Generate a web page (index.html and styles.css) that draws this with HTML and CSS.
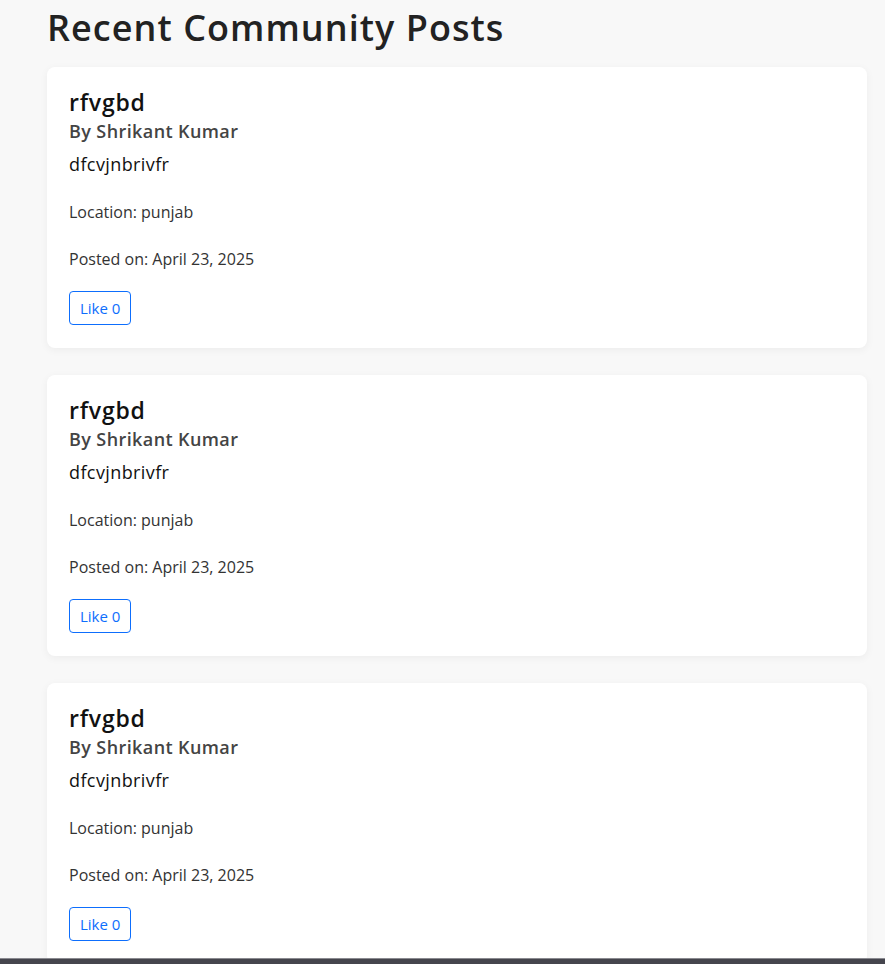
FILE: index.html
```html
<!DOCTYPE html>
<html lang="en">
<head>
<meta charset="utf-8">
<title>Recent Community Posts</title>
<link rel="stylesheet" href="styles.css">
</head>
<body>
<main class="page">
  <h1 class="page-title">Recent Community Posts</h1>
  <section class="posts">
    <article class="post">
      <h3 class="post-title">rfvgbd</h3>
      <p class="post-author">By Shrikant Kumar</p>
      <p class="post-body">dfcvjnbrivfr</p>
      <p class="post-meta">Location: punjab</p>
      <p class="post-meta">Posted on: April 23, 2025</p>
      <button class="like-btn">Like 0</button>
    </article>
    <article class="post">
      <h3 class="post-title">rfvgbd</h3>
      <p class="post-author">By Shrikant Kumar</p>
      <p class="post-body">dfcvjnbrivfr</p>
      <p class="post-meta">Location: punjab</p>
      <p class="post-meta">Posted on: April 23, 2025</p>
      <button class="like-btn">Like 0</button>
    </article>
    <article class="post">
      <h3 class="post-title">rfvgbd</h3>
      <p class="post-author">By Shrikant Kumar</p>
      <p class="post-body">dfcvjnbrivfr</p>
      <p class="post-meta">Location: punjab</p>
      <p class="post-meta">Posted on: April 23, 2025</p>
      <button class="like-btn">Like 0</button>
    </article>
  </section>
</main>
<div class="bottom-bar"></div>
</body>
</html>
```
FILE: styles.css
```css
* { box-sizing: border-box; }
html, body {
  margin: 0;
  padding: 0;
  background: #f8f8f8;
  font-family: "Open Sans", "Liberation Sans", sans-serif;
  color: #222;
}
.page {
  padding: 0 18px 40px 47px;
}
.page-title {
  margin: 0;
  padding-top: 4px;
  font-size: 36px;
  line-height: 48px;
  font-weight: 600;
  letter-spacing: 1.05px;
  color: #222;
}
.posts {
  display: flex;
  flex-direction: column;
  gap: 27px;
  margin-top: 15px;
}
.post {
  background: #fff;
  border-radius: 8px;
  box-shadow: 0 2px 8px rgba(0, 0, 0, 0.05);
  padding: 20px 22px 23px;
  display: flex;
  flex-direction: column;
  align-items: flex-start;
}
.post-title {
  margin: 0;
  font-size: 23px;
  line-height: 30px;
  font-weight: 600;
  letter-spacing: 0.8px;
  color: #111;
}
.post-author {
  margin: 0;
  font-size: 18px;
  line-height: 28px;
  font-weight: 600;
  letter-spacing: 0.4px;
  color: #444;
}
.post-body {
  margin: 5px 0 0;
  font-size: 18px;
  line-height: 28px;
  letter-spacing: 0.4px;
  color: #111;
}
.post-meta {
  margin: 19px 0 0;
  font-size: 16px;
  line-height: 28px;
  color: #333;
}
.post-body + .post-meta {
  margin-top: 20px;
}
.like-btn {
  margin-top: 18px;
  height: 34px;
  padding: 0 10px;
  font-family: inherit;
  font-size: 15px;
  color: #0d6efd;
  background: #fff;
  border: 1px solid #0d6efd;
  border-radius: 4px;
}
.bottom-bar {
  position: fixed;
  left: 0;
  right: 0;
  bottom: 0;
  height: 6px;
  background: #45454d;
  border-top: 1px solid #8a8a90;
}
```
